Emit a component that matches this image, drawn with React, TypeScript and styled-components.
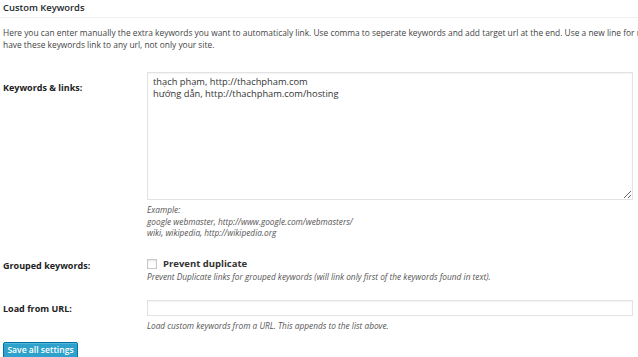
import React from 'react'
import styled, { createGlobalStyle } from 'styled-components'

const Global = createGlobalStyle`
    html, body {
        margin: 0;
        padding: 0;
        background: #fff;
        overflow: hidden;
    }
    body {
        font-family: "Open Sans", "Noto Sans", sans-serif;
        color: #444;
    }
`

export default function App() {
    return (
        <Page>
            <Global />
            <Title>Custom Keywords</Title>
            <Intro>
                Here you can enter manually the extra keywords you want to automaticaly link. Use comma to seperate keywords and add target url at the end. Use a new line for new keyword and link. You can also
                <br />
                have these keywords link to any url, not only your site.
            </Intro>

            <Row $top={21}>
                <Label $pad={9}>Keywords &amp; links:</Label>
                <Field>
                    <Area
                        defaultValue={'thạch phạm, http://thachpham.com\nhướng dẫn, http://thachpham.com/hosting'}
                    />
                    <Hint $gap={4}>
                        Example:
                        <br />
                        google webmaster, http://www.google.com/webmasters/
                        <br />
                        wiki, wikipedia, http://wikipedia.org
                    </Hint>
                </Field>
            </Row>

            <Row $top={19}>
                <Label $pad={1}>Grouped keywords:</Label>
                <Field>
                    <CheckLine>
                        <Box type="checkbox" />
                        <CheckText>Prevent duplicate</CheckText>
                    </CheckLine>
                    <Hint $gap={1}>
                        Prevent Duplicate links for grouped keywords (will link only first of the keywords found in text).
                    </Hint>
                </Field>
            </Row>

            <Row $top={18}>
                <Label $pad={2}>Load from URL:</Label>
                <Field>
                    <Input type="text" />
                    <Hint $gap={4}>
                        Load custom keywords from a URL. This appends to the list above.
                    </Hint>
                </Field>
            </Row>

            <SaveButton>Save all settings</SaveButton>
        </Page>
    )
}

const Page = styled.div`
    padding: 0 6px 0 3px;
    width: 629px;
`

const Title = styled.h3`
    margin: 0 -6px 0 -3px;
    padding: 1px 6px 3px 3px;
    font-size: 9.4px;
    line-height: 13px;
    font-weight: 600;
    color: #23282d;
    border-bottom: 1px solid #f0f0f0;
`

const Intro = styled.p`
    margin: 9px 0 0;
    font-size: 8.4px;
    line-height: 12px;
    white-space: nowrap;
    color: #444;
`

const Row = styled.div<{ $top: number }>`
    display: grid;
    grid-template-columns: 144px 1fr;
    margin-top: ${p => p.$top}px;
`

const Label = styled.div<{ $pad: number }>`
    padding-top: ${p => p.$pad}px;
    font-size: 9px;
    line-height: 13px;
    font-weight: 700;
    color: #222;
`

const Field = styled.div`
    display: flex;
    flex-direction: column;
`

const Area = styled.textarea`
    box-sizing: border-box;
    width: 486px;
    height: 128px;
    margin: 0;
    padding: 3px 5px;
    border: 1px solid #e2e2e2;
    box-shadow: inset 0 1px 2px rgba(0, 0, 0, 0.05);
    font-family: "Open Sans", "Noto Sans", sans-serif;
    font-size: 9.3px;
    line-height: 12px;
    color: #333;
    resize: vertical;
    outline: none;
`

const Hint = styled.div<{ $gap: number }>`
    margin-top: ${p => p.$gap}px;
    font-size: 8.3px;
    line-height: 11.5px;
    font-style: italic;
    color: #555;
    white-space: nowrap;
`

const CheckLine = styled.label`
    display: flex;
    align-items: center;
    gap: 6px;
    height: 12px;
`

const Box = styled.input`
    appearance: none;
    box-sizing: border-box;
    width: 10px;
    height: 10px;
    margin: 0;
    border: 1px solid #c8c8c8;
    background: #fff;
    box-shadow: inset 0 1px 2px rgba(0, 0, 0, 0.1);
`

const CheckText = styled.span`
    font-size: 9.5px;
    font-weight: 700;
    color: #333;
`

const Input = styled.input`
    box-sizing: border-box;
    width: 486px;
    height: 16px;
    margin: 0;
    border: 1px solid #e2e2e2;
    box-shadow: inset 0 1px 2px rgba(0, 0, 0, 0.05);
    outline: none;
`

const SaveButton = styled.button`
    display: block;
    margin-top: 10px;
    padding: 0;
    height: 17px;
    width: 75px;
    border: 1px solid #0074a2;
    border-radius: 2px;
    background: #2ea2cc;
    box-shadow: inset 0 1px 0 rgba(120, 200, 230, 0.5);
    font-family: "Open Sans", "Noto Sans", sans-serif;
    font-size: 8.6px;
    line-height: 13px;
    font-weight: 600;
    color: #fff;
    white-space: nowrap;
`
